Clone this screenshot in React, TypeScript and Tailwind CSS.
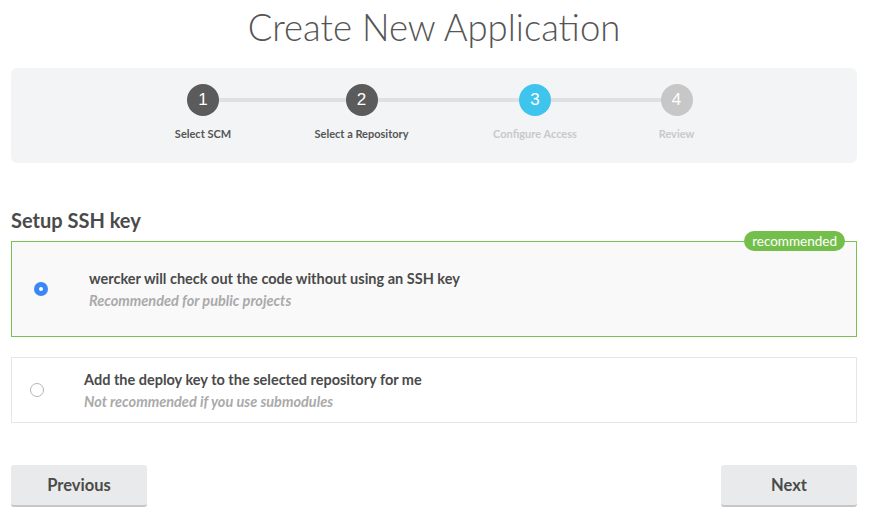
import React from 'react'

const steps = [
  { n: 1, label: 'Select SCM', w: 'w-[58px]', circle: 'bg-[#5b5b5b]', text: 'text-[#555]' },
  { n: 2, label: 'Select a Repository', w: 'w-[99px]', circle: 'bg-[#5b5b5b]', text: 'text-[#555]' },
  { n: 3, label: 'Configure Access', w: 'w-[88px]', circle: 'bg-[#3fc4ee]', text: 'text-[#c9c9c9]' },
  { n: 4, label: 'Review', w: 'w-[35px]', circle: 'bg-[#c7c7c7]', text: 'text-[#c9c9c9]' },
]

export default function App() {
  return (
    <div className="w-[872px] h-[521px] bg-white font-['Lato','Noto_Sans',sans-serif] text-[#4a4a4a] pl-[11px] pr-[15px] pt-[5px]">
      <h1 className="text-center text-[36.5px] font-light leading-[44px] text-[#555]">Create New Application</h1>

      {/* Stepper */}
      <div className="mt-[19px] h-[95px] rounded-md bg-[#f3f4f6] flex justify-center pt-[16px]">
        <div className="relative flex gap-20 h-fit">
          <div className="absolute left-[29px] right-[18px] top-[14px] h-1 bg-[#dfe0e2]" />
          {steps.map((s) => (
            <div key={s.n} className={`relative flex flex-col items-center ${s.w}`}>
              <div className={`w-8 h-8 rounded-full ${s.circle} flex items-center justify-center text-white text-[17px] font-['Liberation_Sans',sans-serif]`}>
                {s.n}
              </div>
              <span className={`mt-[11px] whitespace-nowrap text-[11px] font-bold leading-[14px] ${s.text}`}>{s.label}</span>
            </div>
          ))}
        </div>
      </div>

      <h2 className="mt-[45px] text-[20px] font-bold leading-6 text-[#4a4a4a]">Setup SSH key</h2>

      {/* Option 1 */}
      <div className="relative mt-[9px] h-[96px] border border-[#7bc152] bg-[#f9f9f9] flex items-center pl-[22px]">
        <span className="absolute right-[11px] top-[-11px] rounded-full bg-[#74bf4b] px-2 text-[13.5px] leading-5 text-white">recommended</span>
        <span className="w-[14px] h-[14px] rounded-full bg-[#3b87f5] flex items-center justify-center">
          <span className="w-1 h-1 rounded-full bg-white" />
        </span>
        <div className="ml-[41px] mt-[2px]">
          <div className="text-[14.5px] font-bold leading-[18px] text-[#4a4a4a]">wercker will check out the code without using an SSH key</div>
          <div className="mt-[4px] text-[14.5px] italic font-bold leading-[18px] text-[#aaa]">Recommended for public projects</div>
        </div>
      </div>

      {/* Option 2 */}
      <div className="mt-[20px] h-[66px] border border-[#e6e6e6] bg-white flex items-center pl-[18px]">
        <span className="w-[14px] h-[14px] rounded-full border border-[#b5b5b5] bg-white" />
        <div className="ml-[40px] mt-[2px]">
          <div className="text-[14.5px] font-bold leading-[18px] text-[#4a4a4a]">Add the deploy key to the selected repository for me</div>
          <div className="mt-[4px] text-[14.5px] italic font-bold leading-[18px] text-[#aaa]">Not recommended if you use submodules</div>
        </div>
      </div>

      {/* Buttons */}
      <div className="mt-[42px] flex justify-between">
        <button className="w-[136px] h-[42px] rounded-[3px] bg-[#e8eaeb] border-b-2 border-[#c6c6c6] text-[16.5px] font-bold text-[#4a4a4a]">Previous</button>
        <button className="w-[136px] h-[42px] rounded-[3px] bg-[#e8eaeb] border-b-2 border-[#c6c6c6] text-[16.5px] font-bold text-[#4a4a4a]">Next</button>
      </div>
    </div>
  )
}
